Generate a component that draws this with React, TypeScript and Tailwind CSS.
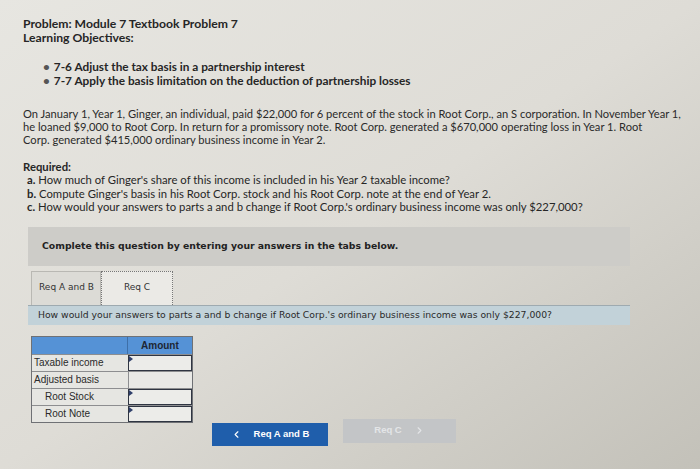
import { ChevronLeft, ChevronRight } from "lucide-react";

const PARAGRAPH = [
  "On January 1, Year 1, Ginger, an individual, paid $22,000 for 6 percent of the stock in Root Corp., an S corporation. In November Year 1,",
  "he loaned $9,000 to Root Corp. In return for a promissory note. Root Corp. generated a $670,000 operating loss in Year 1. Root",
  "Corp. generated $415,000 ordinary business income in Year 2.",
];

const REQUIRED = [
  { key: "a.", text: "How much of Ginger's share of this income is included in his Year 2 taxable income?" },
  { key: "b.", text: "Compute Ginger's basis in his Root Corp. stock and his Root Corp. note at the end of Year 2." },
  { key: "c.", text: "How would your answers to parts a and b change if Root Corp.'s ordinary business income was only $227,000?" },
];

const ROWS = [
  { label: "Taxable income", indent: false, input: true },
  { label: "Adjusted basis", indent: false, input: false },
  { label: "Root Stock", indent: true, input: true },
  { label: "Root Note", indent: true, input: true },
];

function AmountCell({ input }: { input: boolean }) {
  if (!input) {
    return <div className="h-full w-[65px] border-l border-[#8d8e90] bg-[#e9e9e6]" />;
  }
  return (
    <div className="relative h-full w-[65px] border-[1.5px] border-[#2f3542] bg-[#ecece9]">
      <span className="absolute left-0 top-0 h-0 w-0 border-y-[3px] border-l-[4px] border-y-transparent border-l-[#2f3f6a]" />
    </div>
  );
}

export default function App() {
  return (
    <div
      className="h-[469px] w-[700px] overflow-hidden bg-linear-to-br from-[#e7e6e1] via-[#dedcd6] to-[#c3c1b9] pl-[23px] pt-[17px] text-[#262626]"
      style={{ fontFamily: "Lato, 'Open Sans', sans-serif" }}
    >
      <div className="text-[12.2px] font-bold leading-[14px]">
        <div>Problem: Module 7 Textbook Problem 7</div>
        <div>Learning Objectives:</div>
      </div>

      <ul className="mt-[15px] flex flex-col pl-[20px] text-[11.8px] font-bold leading-[14px]">
        <li className="flex gap-[4px]">
          <span className="text-[#555]">•</span>
          <span>7-6 Adjust the tax basis in a partnership interest</span>
        </li>
        <li className="flex gap-[4px]">
          <span className="text-[#555]">•</span>
          <span>7-7 Apply the basis limitation on the deduction of partnership losses</span>
        </li>
      </ul>

      <div className="mt-[19px] text-[11.15px] leading-[13px] text-[#2a2a2a]">
        {PARAGRAPH.map((line) => (
          <div key={line} className="whitespace-nowrap">
            {line}
          </div>
        ))}
      </div>

      <div className="mt-[14px] text-[11.3px] font-bold leading-[13px]">Required:</div>
      <div className="pl-[4px] text-[11.3px] leading-[13.5px]">
        {REQUIRED.map((r) => (
          <div key={r.key} className="whitespace-nowrap">
            <span className="font-bold">{r.key}</span> {r.text}
          </div>
        ))}
      </div>

      {/* question panel */}
      <div className="ml-[5px] w-[602px]" style={{ fontFamily: "'DejaVu Sans', Verdana, sans-serif" }}>
        <div className="mt-[13px] flex h-[39px] items-center bg-[#cdccc8] pl-[14px] text-[9.3px] font-bold text-[#222]">
          Complete this question by entering your answers in the tabs below.
        </div>

        <div className="mt-[5px] flex h-[34px] pl-[3px] text-[9px] text-[#333]">
          <div className="flex w-[70px] items-center border border-b-0 border-[#b9b8b3] bg-[#dcdbd6] pl-[7px]">
            Req A and B
          </div>
          <div className="flex w-[72px] items-center justify-center border border-dotted border-b-0 border-[#777] bg-[#ebeae6]">
            Req C
          </div>
        </div>

        <div className="flex h-[20px] items-center border-t border-[#9eaab0] bg-[#c2d2d9] pl-[10px] text-[9.25px] text-[#2a2a2a]">
          How would your answers to parts a and b change if Root Corp.'s ordinary business income was only $227,000?
        </div>

        <div className="flex items-start">
          <div
            className="ml-[3px] mt-[11px] w-[162px] border border-[#6f7175] bg-[#e6e6e2] text-[10px] text-[#2a2a2a]"
            style={{ fontFamily: "'Liberation Sans', Arial, sans-serif" }}
          >
            <div className="flex h-[17px] bg-[#5592d6]">
              <div className="w-[97px] border-r border-[#3e6fa8]" />
              <div className="flex w-[65px] items-center justify-center font-bold text-[#1d2633]">Amount</div>
            </div>
            {ROWS.map((row) => (
              <div key={row.label} className="flex h-[17px] border-t border-[#8d8e90]">
                <div className={`flex w-[97px] items-center ${row.indent ? "pl-[13px]" : "pl-[2px]"}`}>
                  {row.label}
                </div>
                <AmountCell input={row.input} />
              </div>
            ))}
          </div>

          <div
            className="ml-[19px] mt-[94px] flex items-start gap-[15px] text-[9.5px] font-bold"
            style={{ fontFamily: "'Liberation Sans', Arial, sans-serif" }}
          >
            <div className="mt-[4px] flex h-[23px] w-[116px] items-center justify-center gap-[12px] bg-[#1f5eab] text-white">
              <ChevronLeft className="h-[11px] w-[11px]" strokeWidth={2.5} />
              <span>Req A and B</span>
            </div>
            <div className="flex h-[24px] w-[113px] items-center justify-center gap-[12px] bg-[#c3c5c7] text-[#e3e5e7]">
              <span>Req C</span>
              <ChevronRight className="h-[11px] w-[11px]" strokeWidth={2.5} />
            </div>
          </div>
        </div>
      </div>
    </div>
  );
}
